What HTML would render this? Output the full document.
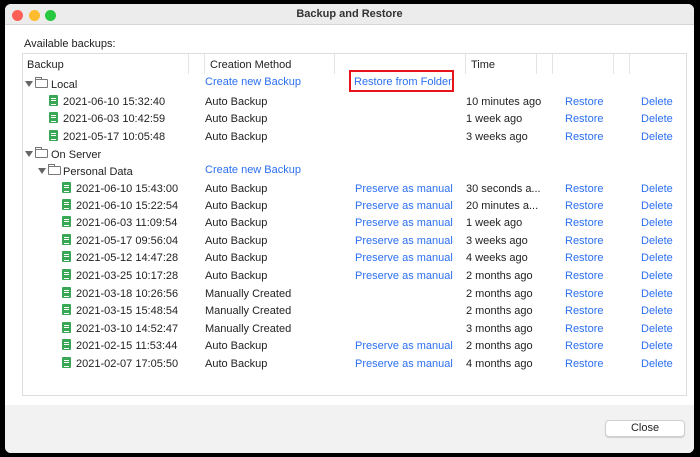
<!DOCTYPE html>
<html><head><style>
*{margin:0;padding:0;box-sizing:border-box}
body{width:700px;height:457px;background:#000;position:relative;overflow:hidden;font-family:"Liberation Sans",sans-serif;font-size:11px;color:#222}
.win{position:absolute;left:5px;top:4px;width:689px;height:449px;background:#fff;border-radius:6px;overflow:hidden}
.tb{position:absolute;left:0;top:0;width:100%;height:21px;background:#ececec;border-bottom:1px solid #d6d6d6;text-align:center;font-weight:bold;font-size:11px;line-height:21px;color:#333}
.dot{position:absolute;top:6px;width:11px;height:11px;border-radius:50%}
.foot{position:absolute;left:0;top:401px;width:100%;height:48px;background:#f2f2f2}
.btn{position:absolute;left:600px;top:416px;width:80px;height:17px;background:#fff;border:1px solid #d0d0d0;border-radius:4px;text-align:center;line-height:15px;font-size:11px;box-shadow:0 1px 1px rgba(0,0,0,.15)}
.tbl{position:absolute;left:22px;top:53px;width:665px;height:343px;border:1px solid #ddd;background:#fff}
.t{position:absolute;white-space:nowrap;line-height:14px;margin-top:1px}
.l{color:#2b6ff0}
.sep{position:absolute;top:54px;width:1px;height:20px;background:#e4e4e4}
.doc{position:absolute;width:9px;height:11px;background:#3aa757;border-radius:1px}
.doc:after{content:"";position:absolute;left:2px;top:3px;width:5px;height:5px;border-top:1px solid #fff;border-bottom:1px solid #fff}
.doc:before{content:"";position:absolute;left:2px;top:5px;width:5px;height:1px;background:#fff}
.fold{position:absolute;width:13px;height:9px;border:1px solid #777;border-radius:1px}
.fold:before{content:"";position:absolute;left:-1px;top:-3px;width:5px;height:2px;border:1px solid #777;border-bottom:none}
.tri{position:absolute;width:0;height:0;border-left:4px solid transparent;border-right:4px solid transparent;border-top:6px solid #666}
</style></head><body>
<div class="win">
<div class="tb">Backup and Restore</div>
<div class="dot" style="left:7px;background:#fe5f57"></div>
<div class="dot" style="left:24px;background:#febc2e"></div>
<div class="dot" style="left:40px;background:#28c840"></div>
<div class="foot"></div>
<div class="btn">Close</div>
</div>
<div class="t" style="left:24px;top:36px">Available backups:</div>
<div class="tbl"></div>
<div class="sep" style="left:188px"></div><div class="sep" style="left:204px"></div><div class="sep" style="left:334px"></div><div class="sep" style="left:465px"></div><div class="sep" style="left:536px"></div><div class="sep" style="left:552px"></div><div class="sep" style="left:613px"></div><div class="sep" style="left:629px"></div>
<div class="t" style="left:27px;top:57px">Backup</div>
<div class="t" style="left:210px;top:57px">Creation Method</div>
<div class="t" style="left:471px;top:57px">Time</div>
<div style="position:absolute;left:349px;top:70px;width:105px;height:22px;border:2px solid #e8141c"></div>

<div class="tri" style="left:25px;top:81px"></div><div class="fold" style="left:35px;top:79px"></div><div class="t" style="left:51px;top:77px">Local</div>
<div class="t l" style="left:205px;top:74px">Create new Backup</div>
<div class="t l" style="left:354px;top:74px">Restore from Folder</div>

<div class="tri" style="left:25px;top:151px"></div><div class="fold" style="left:35px;top:149px"></div><div class="t" style="left:51px;top:147px">On Server</div>
<div class="tri" style="left:38px;top:168px"></div><div class="fold" style="left:48px;top:166px"></div><div class="t" style="left:63px;top:164px">Personal Data</div>
<div class="t l" style="left:205px;top:162px">Create new Backup</div>

<div id="rows"></div>
<script>
var R=[[101,49,"2021-06-10 15:32:40","Auto Backup","","10 minutes ago"],
[118,49,"2021-06-03 10:42:59","Auto Backup","","1 week ago"],
[136,49,"2021-05-17 10:05:48","Auto Backup","","3 weeks ago"],
[188,62,"2021-06-10 15:43:00","Auto Backup","Preserve as manual","30 seconds a..."],
[205,62,"2021-06-10 15:22:54","Auto Backup","Preserve as manual","20 minutes a..."],
[222,62,"2021-06-03 11:09:54","Auto Backup","Preserve as manual","1 week ago"],
[240,62,"2021-05-17 09:56:04","Auto Backup","Preserve as manual","3 weeks ago"],
[257,62,"2021-05-12 14:47:28","Auto Backup","Preserve as manual","4 weeks ago"],
[275,62,"2021-03-25 10:17:28","Auto Backup","Preserve as manual","2 months ago"],
[293,62,"2021-03-18 10:26:56","Manually Created","","2 months ago"],
[310,62,"2021-03-15 15:48:54","Manually Created","","2 months ago"],
[328,62,"2021-03-10 14:52:47","Manually Created","","3 months ago"],
[345,62,"2021-02-15 11:53:44","Auto Backup","Preserve as manual","2 months ago"],
[363,62,"2021-02-07 17:05:50","Auto Backup","Preserve as manual","4 months ago"]];
var h="";R.forEach(function(r){var y=r[0]-7;
h+='<div class="doc" style="left:'+r[1]+'px;top:'+(y+1)+'px"></div><div class="t" style="left:'+(r[1]+14)+'px;top:'+y+'px">'+r[2]+'</div>';
h+='<div class="t" style="left:205px;top:'+y+'px">'+r[3]+'</div>';
if(r[4])h+='<div class="t l" style="left:355px;top:'+y+'px">'+r[4]+'</div>';
h+='<div class="t" style="left:466px;top:'+y+'px">'+r[5]+'</div><div class="t l" style="left:565px;top:'+y+'px">Restore</div><div class="t l" style="left:641px;top:'+y+'px">Delete</div>';});
document.getElementById("rows").innerHTML=h;
</script>
</body></html>
